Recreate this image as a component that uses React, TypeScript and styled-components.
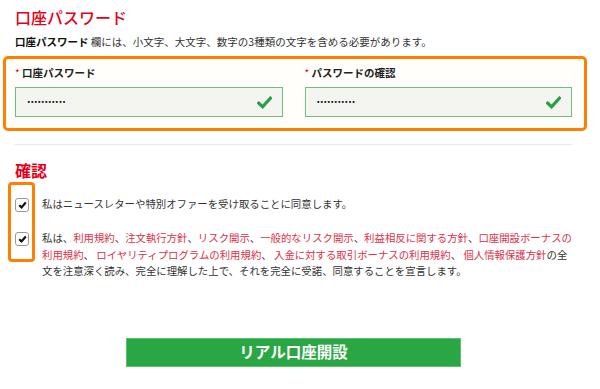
import React from 'react'
import styled, { createGlobalStyle } from 'styled-components'

const GlobalStyle = createGlobalStyle`
    html, body {
        margin: 0;
        padding: 0;
        background: #ffffff;
    }
    body {
        font-family: "Noto Sans CJK JP", "Noto Sans", sans-serif;
        color: #333333;
    }
`

const Page = styled.div`
    width: 557px;
    padding: 7px 28px 0 15px;
`

const Title = styled.h2`
    margin: 0;
    font-size: 16px;
    line-height: 20px;
    font-weight: 500;
    color: #e3001b;
`

const Hint = styled.p`
    margin: 7px 0 0;
    font-size: 10.5px;
    line-height: 16px;
    color: #333333;
    b {
        font-weight: 700;
        color: #111111;
    }
`

const FieldsBox = styled.div`
    margin: 6px -15px 0 -12px;
    padding: 7px 12px 11px 9px;
    border: 3px solid #ff8000;
    border-radius: 5px;
    background: #fffefb;
    display: grid;
    grid-template-columns: 1fr 1fr;
    column-gap: 22px;
`

const Field = styled.div`
    display: flex;
    flex-direction: column;
    gap: 7px;
`

const Label = styled.label`
    display: flex;
    align-items: center;
    gap: 2px;
    font-size: 10.5px;
    line-height: 14px;
    font-weight: 700;
    color: #222222;
    &::before {
        content: '*';
        color: #e3001b;
        font-weight: 400;
        font-size: 10px;
        width: 5px;
    }
`

const InputWrap = styled.div`
    position: relative;
    height: 30px;
    box-sizing: border-box;
    border: 1px solid #6cc27a;
    background: #f4f4f1;
    display: flex;
    align-items: center;
    padding: 0 10px 0 11px;
`

const PasswordInput = styled.input`
    flex: 1;
    min-width: 0;
    border: none;
    outline: none;
    background: transparent;
    font-family: "DejaVu Sans", sans-serif;
    font-size: 5.5px;
    font-weight: 700;
    letter-spacing: 0;
    color: #000000;
    padding: 0;
`

const ValidIcon = styled.svg`
    width: 15px;
    height: 13px;
    flex: none;
`

const Divider = styled.hr`
    margin: 13px 0 0;
    border: none;
    border-top: 1px solid #e9e9e9;
`

const SectionTitle = styled.h3`
    margin: 15px 0 0;
    font-size: 16px;
    line-height: 20px;
    font-weight: 700;
    color: #e3001b;
`

const ConsentList = styled.div`
    position: relative;
    margin-top: 16px;
    display: flex;
    flex-direction: column;
    gap: 17.5px;
`

const Highlight = styled.div`
    position: absolute;
    left: -7px;
    top: -14px;
    width: 27px;
    height: 80px;
    box-sizing: border-box;
    border: 3px solid #ff8000;
    border-radius: 4px;
    pointer-events: none;
`

const ConsentRow = styled.div`
    display: flex;
    align-items: flex-start;
    gap: 13px;
`

const Box = styled.span`
    flex: none;
    width: 14px;
    height: 14px;
    margin-top: 2px;
    box-sizing: border-box;
    border: 1px solid #9a9a9a;
    border-radius: 3px;
    background: #ffffff;
    display: flex;
    align-items: center;
    justify-content: center;
`

const ConsentText = styled.p`
    margin: 0;
    font-size: 10.4px;
    line-height: 16.5px;
    color: #333333;
    white-space: nowrap;
`

const Link = styled.a`
    color: #dc3148;
    text-decoration: none;
`

const ButtonRow = styled.div`
    margin-top: 58px;
    display: flex;
    justify-content: center;
`

const SubmitButton = styled.button`
    width: 335px;
    height: 29px;
    border: 1px solid #5cbf6a;
    background: #29a744;
    color: #ffffff;
    font-family: "Noto Sans CJK JP", sans-serif;
    font-size: 15.5px;
    font-weight: 700;
    line-height: 1;
    padding: 0;
`

const CheckMark: React.FC = () => (
    <ValidIcon viewBox="0 0 15 13">
        <path d="M1.8 7.2 L5.6 10.8 L13.4 2.2" fill="none" stroke="#2a9d45" strokeWidth="3.2" strokeLinecap="square" />
    </ValidIcon>
)

const Tick: React.FC = () => (
    <svg width="9" height="8" viewBox="0 0 9 8">
        <path d="M1.2 4.3 L3.5 6.4 L7.8 1.6" fill="none" stroke="#111111" strokeWidth="2.2" />
    </svg>
)

const links = {
    terms: '利用規約',
    execution: '注文執行方針',
    risk: 'リスク開示',
    generalRisk: '一般的なリスク開示',
    conflict: '利益相反に関する方針',
}

export default function App() {
    return (
        <>
            <GlobalStyle />
            <Page>
                <Title>口座パスワード</Title>
                <Hint>
                    <b>口座パスワード</b> 欄には、小文字、大文字、数字の3種類の文字を含める必要があります。
                </Hint>
                <FieldsBox>
                    <Field>
                        <Label>口座パスワード</Label>
                        <InputWrap>
                            <PasswordInput type="password" readOnly value="Abcdefgh123" />
                            <CheckMark />
                        </InputWrap>
                    </Field>
                    <Field>
                        <Label>パスワードの確認</Label>
                        <InputWrap>
                            <PasswordInput type="password" readOnly value="Abcdefgh123" />
                            <CheckMark />
                        </InputWrap>
                    </Field>
                </FieldsBox>
                <Divider />
                <SectionTitle>確認</SectionTitle>
                <ConsentList>
                    <Highlight />
                    <ConsentRow>
                        <Box><Tick /></Box>
                        <ConsentText>私はニュースレターや特別オファーを受け取ることに同意します。</ConsentText>
                    </ConsentRow>
                    <ConsentRow>
                        <Box><Tick /></Box>
                        <ConsentText>
                            私は、<Link>{links.terms}</Link>、<Link>{links.execution}</Link>、<Link>{links.risk}</Link>、<Link>{links.generalRisk}</Link>、<Link>{links.conflict}</Link>、<Link>口座開設ボーナスの</Link>
                            <br />
                            <Link>利用規約</Link>、 <Link>ロイヤリティプログラムの利用規約</Link>、 <Link>入金に対する取引ボーナスの利用規約</Link>、 <Link>個人情報保護方針</Link>の全
                            <br />
                            文を注意深く読み、完全に理解した上で、それを完全に受諾、同意することを宣言します。
                        </ConsentText>
                    </ConsentRow>
                </ConsentList>
                <ButtonRow>
                    <SubmitButton>リアル口座開設</SubmitButton>
                </ButtonRow>
            </Page>
        </>
    )
}
